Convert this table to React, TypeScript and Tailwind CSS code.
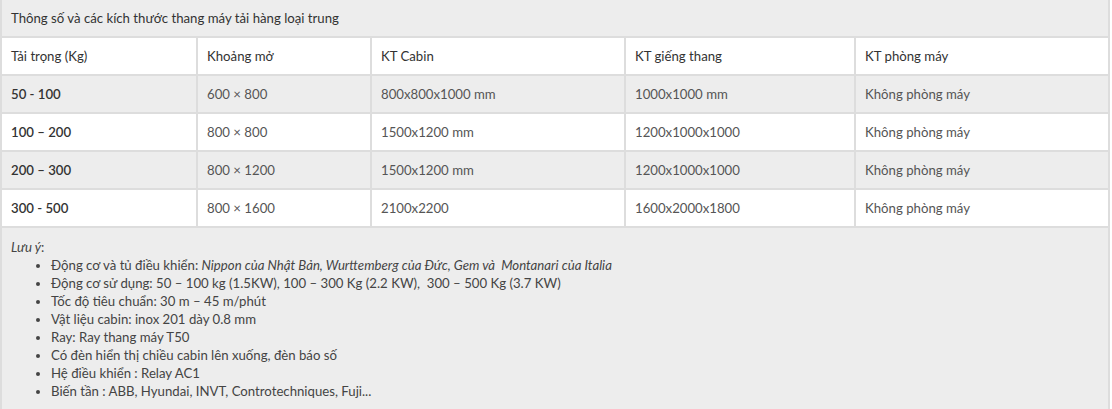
import React from "react"

const rows = [
    ["50 - 100", "600 × 800", "800x800x1000 mm", "1000x1000 mm", "Không phòng máy"],
    ["100 – 200", "800 × 800", "1500x1200 mm", "1200x1000x1000", "Không phòng máy"],
    ["200 – 300", "800 × 1200", "1500x1200 mm", "1200x1000x1000", "Không phòng máy"],
    ["300 - 500", "800 × 1600", "2100x2200", "1600x2000x1800", "Không phòng máy"],
]

const notes = [
    "Động cơ sử dụng: 50 – 100 kg (1.5KW), 100 – 300 Kg (2.2 KW),  300 – 500 Kg (3.7 KW)",
    "Tốc độ tiêu chuẩn: 30 m – 45 m/phút",
    "Vật liệu cabin: inox 201 dày 0.8 mm",
    "Ray: Ray thang máy T50",
    "Có đèn hiển thị chiều cabin lên xuống, đèn báo số",
    "Hệ điều khiển : Relay AC1",
    "Biến tần : ABB, Hyundai, INVT, Controtechniques, Fuji...",
]

// column widths incl. the 2px left divider of cols 2-5
const widths = ["w-[194px]", "w-[174px]", "w-[254px]", "w-[230px]", "w-[254px]"]

export default function App() {
    return (
        <div className="w-[1112px] h-[409px] bg-white overflow-hidden text-[13.2px] text-[#333]" style={{ fontFamily: "Lato, 'Noto Sans', sans-serif" }}>
            <div className="w-[1110px] bg-[#dddddd] px-[2px]">
                <table className="w-full border-separate border-spacing-x-0 border-spacing-y-[2px] -mt-[2px] table-fixed">
                    <colgroup>
                        {widths.map((w) => (
                            <col key={w} className={w} />
                        ))}
                    </colgroup>
                    <tbody>
                        <tr>
                            <td colSpan={5} className="h-[36px] bg-[#ededed] px-[9px] pt-[2px] align-middle">
                                Thông số và các kích thước thang máy tải hàng loại trung
                            </td>
                        </tr>
                        <tr>
                            {["Tải trọng (Kg)", "Khoảng mở", "KT Cabin", "KT giếng thang", "KT phòng máy"].map((h, i) => (
                                <td key={h} className={`h-[36px] bg-white px-[9px] pt-[2px] ${i > 0 ? "border-l-2 border-[#dddddd]" : ""}`}>
                                    {h}
                                </td>
                            ))}
                        </tr>
                        {rows.map((r, ri) => (
                            <tr key={ri}>
                                {r.map((c, i) => (
                                    <td
                                        key={i}
                                        className={`h-[36px] px-[9px] pt-[2px] ${ri % 2 === 0 ? "bg-[#ededed]" : "bg-white"} ${i > 0 ? "border-l-2 border-[#dddddd] text-[#555]" : "font-semibold text-[#333]"}`}
                                    >
                                        {c}
                                    </td>
                                ))}
                            </tr>
                        ))}
                    </tbody>
                </table>
                <div className="bg-[#ededed] px-[9px] pt-[10px] pb-6 text-[#444] leading-[18px]">
                    <p><em>Lưu ý</em>:</p>
                    <ul className="list-disc pl-[40px] marker:text-[#444]">
                        <li className="whitespace-pre">
                            Động cơ và tủ điều khiển: <em>Nippon của Nhật Bản, Wurttemberg của Đức, Gem và  Montanari của Italia</em>
                        </li>
                        {notes.map((n) => (
                            <li key={n} className="whitespace-pre">{n}</li>
                        ))}
                    </ul>
                </div>
            </div>
        </div>
    )
}
